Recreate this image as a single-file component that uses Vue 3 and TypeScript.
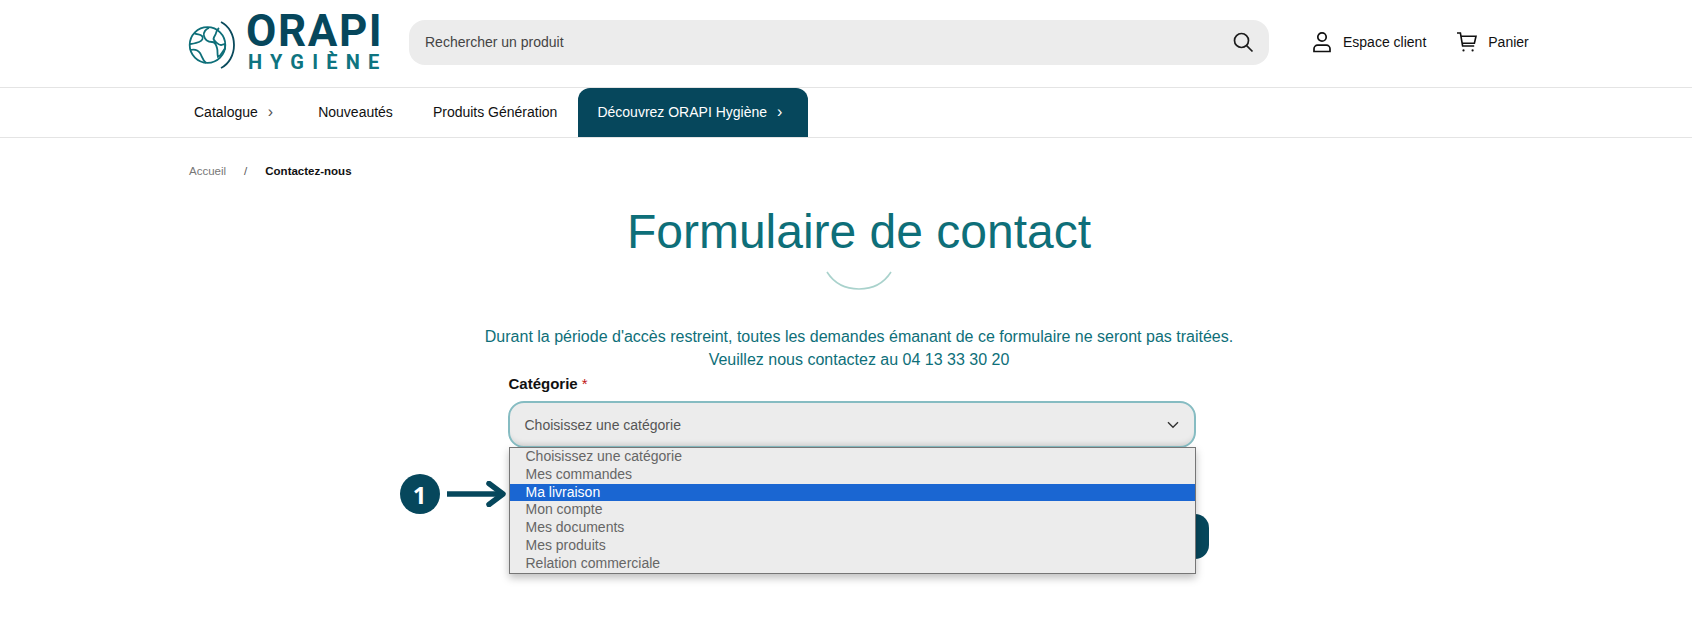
<script setup lang="ts">
const navItems = [
  { label: 'Catalogue', arrow: true },
  { label: 'Nouveautés', arrow: false },
  { label: 'Produits Génération', arrow: false }
]

const options = [
  'Choisissez une catégorie',
  'Mes commandes',
  'Ma livraison',
  'Mon compte',
  'Mes documents',
  'Mes produits',
  'Relation commerciale'
]
const selected = 'Ma livraison'
</script>

<template>
  <div class="page">
    <header class="top">
      <div class="logo">
        <svg class="globe" width="52" height="52" viewBox="0 0 52 52" fill="none">
          <circle cx="19.5" cy="26" r="17.8" stroke="#0e6f79" stroke-width="1.8" />
          <path d="M6 14c3 2 6 1 8 3s0 5-3 6-6 2-9 2M2 31c4-1 8 0 10 3s2 6 6 10" stroke="#0e6f79" stroke-width="1.8" />
          <path d="M21 9c-3 1-6 4-5 8s4 6 8 6 4 3 5 6 0 6 1 9c3-1 4-5 6-7s1-4 1-6l-4 1c-3 0-5-3-7-5s2-5 2-7 1-3 3-5" stroke="#0e6f79" stroke-width="1.8" />
          <path d="M33 3c8 4 13 13 13 23s-5 19-13 23" stroke="#0a4a5c" stroke-width="1.8" />
        </svg>
        <div class="brand">
          <span class="brand-main">ORAPI</span>
          <span class="brand-sub">HYGIÈNE</span>
        </div>
      </div>

      <div class="search">
        <span>Rechercher un produit</span>
        <svg width="22" height="22" viewBox="0 0 22 22" fill="none" stroke="#1c1c1c" stroke-width="1.7">
          <circle cx="9.5" cy="9.5" r="7" />
          <path d="M14.6 14.6 20.5 20.5" />
        </svg>
      </div>

      <a class="action action-client">
        <svg width="20" height="22" viewBox="0 0 20 22" fill="none" stroke="#111" stroke-width="1.7">
          <circle cx="10" cy="6" r="4.2" />
          <path d="M2 20.5v-2.7c0-2 1.6-3.6 3.6-3.6h8.8c2 0 3.6 1.6 3.6 3.6v2.7z" />
        </svg>
        Espace client
      </a>
      <a class="action">
        <svg width="21" height="22" viewBox="0 0 21 22" fill="none" stroke="#111" stroke-width="1.6">
          <path d="M1 2h3.4l2.2 13h11.6" />
          <path d="M5 5.2h15l-1.6 7H6.2" />
          <circle cx="7.5" cy="19.4" r="1.1" fill="#111" stroke="none" />
          <circle cx="16.6" cy="19.4" r="1.1" fill="#111" stroke="none" />
        </svg>
        Panier
      </a>
    </header>

    <nav class="nav">
      <a v-for="item in navItems" :key="item.label" class="nav-item">
        {{ item.label }}
        <span v-if="item.arrow" class="chev">›</span>
      </a>
      <a class="nav-cta">Découvrez ORAPI Hygiène <span class="chev chev-white">›</span></a>
    </nav>

    <div class="crumbs">
      <span class="crumb-link">Accueil</span>
      <span class="crumb-sep">/</span>
      <strong>Contactez-nous</strong>
    </div>

    <main class="main">
      <h1>Formulaire de contact</h1>
      <svg class="smile" width="66" height="20" viewBox="0 0 66 20" fill="none">
        <path d="M1 1c7 11 18 17 32 17s25-6 32-17" stroke="#a9d2cc" stroke-width="1.6" />
      </svg>
      <p class="notice">
        Durant la période d'accès restreint, toutes les demandes émanant de ce formulaire ne seront pas traitées.<br />
        Veuillez nous contactez au 04 13 33 30 20
      </p>

      <form class="form">
        <label class="label">Catégorie <span class="req">*</span></label>
        <div class="select">
          <span>Choisissez une catégorie</span>
          <svg width="12" height="8" viewBox="0 0 12 8" fill="none" stroke="#333" stroke-width="1.4">
            <path d="M1 1.2 6 6.2l5-5" />
          </svg>
        </div>
        <ul class="dropdown">
          <li v-for="opt in options" :key="opt" :class="{ active: opt === selected }">{{ opt }}</li>
        </ul>
        <div class="submit"></div>

        <div class="callout">
          <span class="badge">1</span>
          <svg width="62" height="26" viewBox="0 0 62 26" fill="none" stroke="#06475c" stroke-width="5.5">
            <path d="M1 13h56" />
            <path d="M43 2.5 57 13 43 23.5" stroke-linecap="round" stroke-linejoin="round" />
          </svg>
        </div>
      </form>
    </main>
  </div>
</template>

<style>
body {
  background: #fff;
}
</style>

<style scoped>
.page {
  width: 1692px;
  height: 622px;
  overflow: hidden;
  font-family: "Liberation Sans", Arial, sans-serif;
  color: #111;
}

.top {
  display: flex;
  align-items: center;
  height: 87px;
  padding-left: 188px;
  border-bottom: 1px solid #e4e4e4;
}

.logo {
  display: flex;
  align-items: center;
  gap: 6px;
  width: 221px;
}

.globe {
  flex: none;
  margin-top: 2px;
}

.brand {
  display: flex;
  flex-direction: column;
  margin-top: -3px;
  color: #06475c;
  font-family: Roboto, sans-serif;
  font-weight: 700;
}

.brand-main {
  font-size: 44px;
  line-height: 39px;
  letter-spacing: 1.6px;
}

.brand-sub {
  padding-left: 2px;
  font-size: 20px;
  line-height: 22px;
  letter-spacing: 8.2px;
  color: #0e7480;
}

.search {
  display: flex;
  align-items: center;
  justify-content: space-between;
  width: 860px;
  height: 45px;
  margin-top: -2px;
  padding: 0 15px 2px 16px;
  box-sizing: border-box;
  background: #ececec;
  border-radius: 16px;
  color: #444;
  font-size: 14px;
}

.action {
  display: flex;
  align-items: center;
  gap: 11px;
  margin-left: 30px;
  margin-top: -4px;
  color: #111;
  font-size: 14px;
}

.action-client {
  margin-left: 43px;
}

.nav {
  display: flex;
  height: 49px;
  padding-left: 194px;
  border-bottom: 1px solid #e4e4e4;
  font-size: 14px;
}

.nav-item {
  display: flex;
  align-items: center;
  margin-right: 40px;
  padding-bottom: 2px;
}

.nav-item:first-child {
  margin-right: 45px;
}

.chev {
  margin-left: 10px;
  font-size: 16px;
  color: #555;
}

.chev-white {
  color: #fff;
}

.nav-cta {
  display: flex;
  align-items: center;
  margin-left: -19px;
  padding: 0 26px 2px 19px;
  background: #06475c;
  color: #fff;
  border-radius: 12px 12px 0 0;
}

.crumbs {
  display: flex;
  gap: 18px;
  padding: 27px 0 0 189px;
  font-size: 11.5px;
  line-height: 13px;
}

.crumb-link {
  color: #777;
}

.crumb-sep {
  color: #555;
}

.main {
  display: flex;
  flex-direction: column;
  align-items: center;
  padding-left: 26px;
}

h1 {
  margin: 24px 0 0;
  font-size: 48px;
  font-weight: 400;
  line-height: 60px;
  color: #0e6f79;
}

.smile {
  margin-top: 9px;
}

.notice {
  margin: 34px 0 0;
  text-align: center;
  font-size: 16px;
  line-height: 23px;
  color: #0e6f79;
}

.form {
  position: relative;
  width: 700px;
  margin-left: -25px;
  padding-left: 12px;
  box-sizing: border-box;
}

.label {
  display: block;
  margin-top: 4px;
  font-size: 15px;
  font-weight: 700;
  line-height: 18px;
}

.req {
  color: #c01818;
  font-weight: 400;
}

.select {
  display: flex;
  align-items: center;
  justify-content: space-between;
  width: 688px;
  height: 47px;
  margin-top: 8px;
  margin-left: -1px;
  padding: 0 15px;
  box-sizing: border-box;
  border: 2px solid #86bcc2;
  border-radius: 16px;
  background: #ececec;
  box-shadow: inset 0 -7px 6px -6px rgba(0, 0, 0, 0.14);
  color: #555;
  font-size: 14px;
}

.dropdown {
  position: absolute;
  z-index: 2;
  top: 76px;
  left: 12px;
  width: 687px;
  margin: 0;
  padding: 0;
  box-sizing: border-box;
  list-style: none;
  background: #ececec;
  border: 1px solid #767676;
  box-shadow: 0 4px 8px rgba(0, 0, 0, 0.25);
  color: #666;
  font-size: 14px;
  line-height: 17.8px;
}

.dropdown li {
  padding-left: 16px;
}

.dropdown .active {
  background: #1a66d2;
  color: #fff;
}

.submit {
  width: 640px;
  height: 45px;
  margin-top: 66px;
  margin-left: 60px;
  background: #06475c;
  border-radius: 14px;
}

.callout {
  position: absolute;
  top: 103px;
  left: -97px;
  display: flex;
  align-items: center;
  gap: 6px;
}

.badge {
  display: flex;
  align-items: center;
  justify-content: center;
  width: 40px;
  height: 40px;
  border-radius: 50%;
  background: #06475c;
  color: #fff;
  font-family: "Open Sans", sans-serif;
  font-size: 24px;
  font-weight: 700;
}
</style>
